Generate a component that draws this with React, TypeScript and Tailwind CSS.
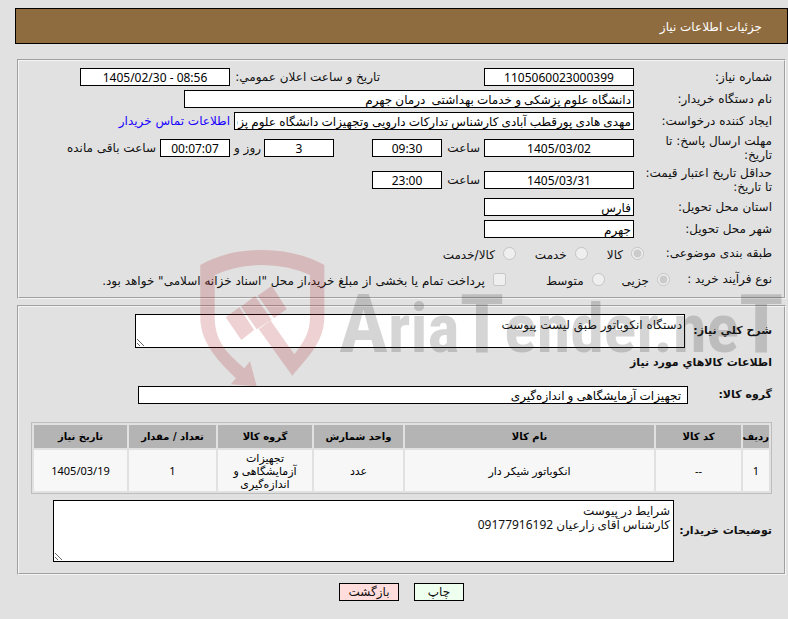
import React from 'react';

const inputBase =
  "h-[18px] min-w-0 border border-black bg-white px-[2px] font-['Noto_Sans','DejaVu_Sans',sans-serif] text-[12px] text-black outline-none";

interface FieldProps {
  id: string;
  value: string;
  className?: string;
}

// متن فارسی راست‌چین
const TextField: React.FC<FieldProps> = ({ id, value, className = '' }) => (
  <input id={id} type="text" readOnly dir="rtl" defaultValue={value} className={`${inputBase} ${className}`} />
);

// اعداد و تاریخ‌ها وسط‌چین
const NumberField: React.FC<FieldProps> = ({ id, value, className = '' }) => (
  <input id={id} type="text" readOnly dir="ltr" defaultValue={value} className={`${inputBase} text-center ${className}`} />
);

interface RowProps {
  label: string;
  htmlFor?: string;
  className?: string;
  children: React.ReactNode;
}

const Row: React.FC<RowProps> = ({ label, htmlFor, className = 'h-[22px]', children }) => (
  <div className={`flex items-center ${className}`}>
    <label htmlFor={htmlFor} className="w-[138px] shrink-0 pl-[8px] leading-[14px]">
      {label}
    </label>
    {children}
  </div>
);

interface ChoiceProps {
  type?: 'radio' | 'checkbox';
  name: string;
  label: string;
  checked?: boolean;
}

const Choice: React.FC<ChoiceProps> = ({ type = 'radio', name, label, checked }) => (
  <label className="flex items-center gap-2 whitespace-nowrap">
    <input type={type} name={name} disabled defaultChecked={checked} className="size-[13px]" />
    <span className="pt-1">{label}</span>
  </label>
);

const columns = [
  { title: 'ردیف', width: 'w-[26px]' },
  { title: 'کد کالا', width: 'w-[85px]' },
  { title: 'نام کالا', width: 'w-auto' },
  { title: 'واحد شمارش', width: 'w-[89px]' },
  { title: 'گروه کالا', width: 'w-[94px]' },
  { title: 'تعداد / مقدار', width: 'w-[87px]' },
  { title: 'تاریخ نیاز', width: 'w-[93px]' },
];

const items = [['1', '--', 'انکوباتور شیکر دار', 'عدد', 'تجهیزات آزمایشگاهی و اندازه‌گیری', '1', '1405/03/19']];

const Watermark = () => (
  <div dir="ltr" aria-hidden="true" className="pointer-events-none absolute top-[250px] left-[200px] flex items-start opacity-20">
    <svg width="125" height="137" viewBox="0 0 125 137" fill="#af1e23" className="shrink-0">
      <path d="M.3 15Q27 0 62 0T124.3 15V67C124.3 91 109 106 92.3 125.7L58.7 79 70.7 70.7 94.3 104.3C105 91 110 81 110 67V25Q88 15 62 15T14.7 25V67C14.7 94 30 105 44.3 118.3L50 111.3 56.7 136.3 30.7 134.3 36 128.3C15 108 .3 91 .3 67Z" />
      <path d="M25.7 67.3 39.3 57.3 54 80 41.3 90ZM41 56.7 55 46 71.7 70 56.7 79.3ZM57.7 45.7 71.7 35.7 86.7 59 74 68.3Z" />
    </svg>
    <span className="pt-[34px] pl-[14px] font-['Roboto_Condensed','Liberation_Sans_Narrow',Roboto,sans-serif] text-[68px] leading-[80px] font-bold whitespace-nowrap text-[#323232]">
      <span className="text-[82px]">A</span>ria<span className="text-[82px]">T</span>ender.ne<span className="text-[82px]">T</span>
    </span>
  </div>
);

const panel = 'mr-[2px] ml-[2px] min-w-0 border-2 border-[#f4f4f4] [border-style:groove]';

export default function App() {
  return (
    <div
      dir="rtl"
      className="relative min-h-screen overflow-hidden bg-[#e1e1e1] pt-2 pl-[15px] font-['DejaVu_Sans',sans-serif] text-[12px] leading-[14px] text-[#111]"
    >
      <h1 className="flex h-9 items-center border border-black bg-[#8f6c40] pt-[2px] pr-[25px] text-white">جزئیات اطلاعات نیاز</h1>

      <fieldset className={`${panel} mt-[15px] py-[5px] pr-3 pl-[9px]`}>
        <Row label="شماره نیاز:" htmlFor="need-no">
          <NumberField id="need-no" value="1105060023000399" className="w-[150px]" />
          <label htmlFor="announce" className="mr-[104px] w-[150px] whitespace-nowrap">
            تاریخ و ساعت اعلان عمومي:
          </label>
          <NumberField id="announce" value="1405/02/30 - 08:56" className="w-[150px]" />
        </Row>
        <Row label="نام دستگاه خریدار:" htmlFor="buyer">
          <TextField id="buyer" value="دانشگاه علوم پزشکی و خدمات بهداشتی  درمان جهرم" className="w-[450px]" />
        </Row>
        <Row label="ایجاد کننده درخواست:" htmlFor="creator">
          <TextField
            id="creator"
            value="مهدی هادی پورقطب آبادی کارشناس تدارکات دارویی وتجهیزات دانشگاه علوم پزشکی جهرم"
            className="w-[400px]"
          />
          <a href="#contact" className="mr-1 whitespace-nowrap text-[#1a00ff]">
            اطلاعات تماس خریدار
          </a>
        </Row>
        <Row label="مهلت ارسال پاسخ: تا تاریخ:" htmlFor="deadline" className="h-8">
          <NumberField id="deadline" value="1405/03/02" className="w-[150px]" />
          <label htmlFor="deadline-hour" className="w-[42px] pr-1">
            ساعت
          </label>
          <NumberField id="deadline-hour" value="09:30" className="w-[70px]" />
          <NumberField id="days" value="3" className="mr-[38px] w-[70px]" />
          <label htmlFor="days" className="w-[34px] pr-[3px] whitespace-nowrap">
            روز و
          </label>
          <NumberField id="left" value="00:07:07" className="w-[70px] bg-[#fffff0]" />
          <label htmlFor="left" className="pr-1 whitespace-nowrap">
            ساعت باقی مانده
          </label>
        </Row>
        <Row label="حداقل تاریخ اعتبار قیمت: تا تاریخ:" htmlFor="validity" className="h-8">
          <NumberField id="validity" value="1405/03/31" className="w-[150px]" />
          <label htmlFor="validity-hour" className="w-[42px] pr-1">
            ساعت
          </label>
          <NumberField id="validity-hour" value="23:00" className="w-[70px]" />
        </Row>
        <Row label="استان محل تحویل:" htmlFor="province">
          <TextField id="province" value="فارس" className="w-[150px]" />
        </Row>
        <Row label="شهر محل تحویل:" htmlFor="city">
          <TextField id="city" value="جهرم" className="w-[150px]" />
        </Row>
        <div className="flex h-[26px] items-center">
          <span className="w-[128px] shrink-0">طبقه بندی موضوعی:</span>
          <div className="flex gap-[19px]">
            <Choice name="subject" label="کالا" checked />
            <Choice name="subject" label="خدمت" />
            <Choice name="subject" label="کالا/خدمت" />
          </div>
        </div>
        <div className="flex h-[26px] items-center">
          <span className="w-[102px] shrink-0">نوع فرآیند خرید :</span>
          <div className="flex gap-[17px]">
            <Choice name="process" label="جزیی" checked />
            <Choice name="process" label="متوسط" />
          </div>
          <div className="mr-10">
            <Choice type="checkbox" name="treasury" label={'پرداخت تمام یا بخشی از مبلغ خرید،از محل "اسناد خزانه اسلامی" خواهد بود.'} />
          </div>
        </div>
      </fieldset>

      <fieldset className={`${panel} mt-[6px] pt-[7px] pr-3 pb-[11px] pl-[12px]`}>
        <div className="flex items-center">
          <label htmlFor="summary" className="w-[87px] shrink-0 text-[11px] font-bold whitespace-nowrap">
            شرح كلي نياز:
          </label>
          <textarea
            id="summary"
            readOnly
            defaultValue="دستگاه انکوباتور طبق لیست پیوست"
            className="block h-[34px] w-[550px] min-w-0 resize border border-black bg-white px-[2px] py-[3px] outline-none"
          />
        </div>
        <h2 className="pt-2 text-[11px] leading-[14px] font-bold">اطلاعات كالاهاي مورد نياز</h2>
        <div className="mt-4 flex items-center">
          <label htmlFor="group" className="w-[84px] shrink-0 text-[11px] font-bold">
            گروه کالا:
          </label>
          <TextField id="group" value="تجهیزات آزمایشگاهی و اندازه‌گیری" className="w-[550px] pr-[6px]" />
        </div>

        <table className="mt-[18px] w-full table-fixed border-separate border-spacing-[2px] border border-[#bdbdbd] text-center text-[10px] text-black">
          <thead>
            <tr className="h-[23px]">
              {columns.map((col) => (
                <th key={col.title} className={`${col.width} bg-[#b4b4b4] p-0 font-bold whitespace-nowrap`}>
                  {col.title}
                </th>
              ))}
            </tr>
          </thead>
          <tbody>
            {items.map((item) => (
              <tr key={item[0]} className="h-[41px]">
                {item.map((cell, i) => (
                  <td
                    key={columns[i].title}
                    className="bg-[#f7f7f7] px-2 py-0 font-['Noto_Sans','DejaVu_Sans',sans-serif] text-[11px] leading-[13px]"
                  >
                    {cell}
                  </td>
                ))}
              </tr>
            ))}
          </tbody>
        </table>

        <div className="mt-[6px] flex items-center">
          <label htmlFor="notes" className="w-[98px] shrink-0 text-[11px] font-bold whitespace-nowrap">
            توضیحات خریدار:
          </label>
          <textarea
            id="notes"
            readOnly
            defaultValue={'شرایط در پیوست\nکارشناس آقای زارعیان 09177916192'}
            className="block h-[62px] w-[621px] min-w-0 resize border border-black bg-white px-[3px] py-[3px] font-['Noto_Sans','DejaVu_Sans',sans-serif] outline-none"
          />
        </div>
      </fieldset>

      <div className="mt-2 flex justify-center gap-[15px]">
        <button type="button" className="h-[18px] w-[50px] border border-black bg-[#efffef]">
          چاپ
        </button>
        <button type="button" className="h-[18px] w-[60px] border border-black bg-[#ffdddd]">
          بازگشت
        </button>
      </div>

      <Watermark />
    </div>
  );
}
